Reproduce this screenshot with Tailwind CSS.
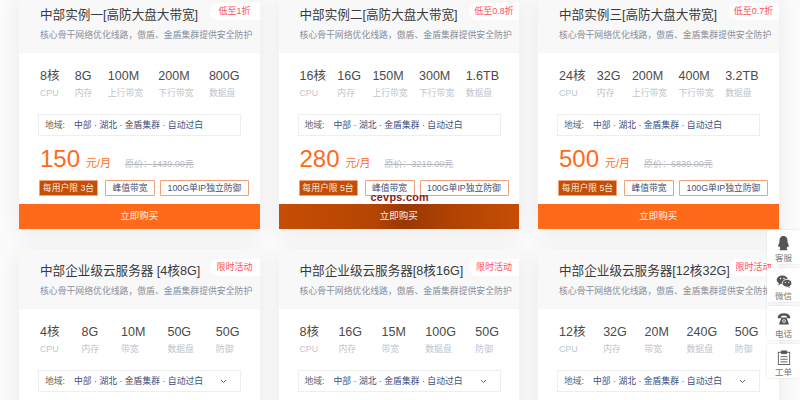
<!DOCTYPE html>
<html lang="zh-CN">
<head>
<meta charset="UTF-8">
<title>云服务器</title>
<script src="https://cdn.jsdelivr.net/npm/@tailwindcss/browser@4"></script>
</head>
<body class="relative h-[400px] w-[800px] overflow-hidden bg-[#fbfbfb] font-['Liberation_Sans','Noto_Sans_CJK_SC',sans-serif]">
<div id="cards" class="-mt-[7px] grid h-[407px] grid-cols-[240.5px_240.5px_240.5px] content-start gap-x-[19px] gap-y-[20px] overflow-hidden pl-[19px]"></div>

<!-- Floating sidebar -->
<div class="absolute left-[767px] top-[230px] flex w-[33px] flex-col gap-[4px] text-[#777]">
  <div class="flex h-[34px] flex-col items-center bg-white pt-[3px] text-[8.5px] leading-[11px] shadow-[0_0_2px_rgba(0,0,0,0.12)]">
    <div class="flex h-[20px] items-center"><svg width="13" height="17" viewBox="0 0 16 19" preserveAspectRatio="none" fill="#555"><path d="M8 1C4.600 1 3 3.600 3 6.500c0 .9 0 1.600-.2 2.300C2 10.200 1.300 11.700 1.500 13c.2.800.9.300 1.500-.5.300 1 .8 1.800 1.500 2.400-.9.400-1.500.9-1.300 1.500.3.800 2.300.8 3.800.6.400-.1.900-.2 1-.3.100.1.600.2 1 .3 1.500.2 3.500.2 3.800-.6.200-.6-.4-1.100-1.300-1.500.7-.6 1.200-1.400 1.500-2.400.6.800 1.300 1.300 1.500.5.200-1.300-.5-2.800-1.300-4.200-.2-.7-.2-1.400-.2-2.300C13 3.600 11.400 1 8 1z"/></svg></div>
    <span>客服</span>
  </div>
  <div class="flex h-[34px] flex-col items-center bg-white pt-[3px] text-[8.5px] leading-[11px] shadow-[0_0_2px_rgba(0,0,0,0.12)]">
    <div class="flex h-[20px] items-center"><svg width="16" height="13" viewBox="0 0 18 15" fill="#555"><ellipse cx="7" cy="5.500" rx="6.500" ry="5"/><path d="M3 9l-.5 3 3-2z"/><ellipse cx="12.500" cy="9.500" rx="5.500" ry="4.500" stroke="#fff" stroke-width="1"/><path d="M15 13l1 2-3-1.500z"/><circle cx="5" cy="4" r=".9" fill="#fff"/><circle cx="9" cy="4" r=".9" fill="#fff"/><circle cx="10.500" cy="8.500" r=".7" fill="#fff"/><circle cx="14.500" cy="8.500" r=".7" fill="#fff"/></svg></div>
    <span>微信</span>
  </div>
  <div class="flex h-[34px] flex-col items-center bg-white pt-[3px] text-[8.5px] leading-[11px] shadow-[0_0_2px_rgba(0,0,0,0.12)]">
    <div class="flex h-[20px] items-center"><svg width="14" height="14" viewBox="0 0 18 17" fill="#555"><path d="M1 6c0-3 4-5 8-5s8 2 8 5v1.500h-4.500V5c-2-.8-5-.8-7 0v2.500H1z"/><path d="M6 6.500h6l3 7.500v1.500H3V14z"/><circle cx="9" cy="11" r="2.300" fill="#fff"/><circle cx="9" cy="11" r="1.100"/></svg></div>
    <span>电话</span>
  </div>
  <div class="flex h-[34px] flex-col items-center bg-white pt-[3px] text-[8.5px] leading-[11px] shadow-[0_0_2px_rgba(0,0,0,0.12)]">
    <div class="flex h-[20px] items-center"><svg width="14" height="15" viewBox="0 0 16 17" fill="none" stroke="#555" stroke-width="1"><rect x="1.500" y="2.500" width="13" height="14"/><path d="M5 1h6v3H5z" fill="#555"/><path d="M4 7.500h8M4 10.500h8M4 13.500h8"/></svg></div>
    <span>工单</span>
  </div>
</div>

<script>
  const plans = [
    { title: '中部实例一[高防大盘大带宽]', tag: '低至1折', specs: [['8核','CPU'],['8G','内存'],['100M','上行带宽'],['200M','下行带宽'],['800G','数据盘']], price: '150', old: '1439.00', limit: '3台' },
    { title: '中部实例二[高防大盘大带宽]', tag: '低至0.8折', specs: [['16核','CPU'],['16G','内存'],['150M','上行带宽'],['300M','下行带宽'],['1.6TB','数据盘']], price: '280', old: '3219.00', limit: '5台', hover: true },
    { title: '中部实例三[高防大盘大带宽]', tag: '低至0.7折', specs: [['24核','CPU'],['32G','内存'],['200M','上行带宽'],['400M','下行带宽'],['3.2TB','数据盘']], price: '500', old: '6839.00', limit: '5台' },
    { title: '中部企业级云服务器 [4核8G]', tag: '限时活动', specs: [['4核','CPU'],['8G','内存'],['10M','带宽'],['50G','数据盘'],['50G','防御']], select: true },
    { title: '中部企业级云服务器[8核16G]', tag: '限时活动', specs: [['8核','CPU'],['16G','内存'],['15M','带宽'],['100G','数据盘'],['50G','防御']], select: true },
    { title: '中部企业级云服务器[12核32G]', tag: '限时活动', specs: [['12核','CPU'],['32G','内存'],['20M','带宽'],['240G','数据盘'],['50G','防御']], select: true }
  ];

  function cardHtml(p) {
    const specs = p.specs.map(s => `<div><div class="text-[12.5px] leading-[18px] text-[#4a4a4a]">${s[0]}</div><div class="mt-[2px] text-[8.8px] leading-[12px] text-[#c0c4cc]">${s[1]}</div></div>`).join('');
    const chevron = p.select ? '<svg class="ml-[17px]" width="7" height="5" viewBox="0 0 7 5" fill="none" stroke="#666" stroke-width="1"><path d="M1 1l2.500 2.500L6 1"/></svg>' : '';
    const buy = p.hover
      ? '<div class="mt-auto flex h-[25px] items-center justify-center bg-[linear-gradient(90deg,#c74d05_0%,#b54503_40%,#993703_52%,#b04303_72%,#c74d05_100%)] text-[9.5px] text-[#ffeee4]">立即购买</div><div class="absolute left-[92px] top-[197px] font-[\'DejaVu_Sans\',sans-serif] text-[10.8px] font-bold leading-[14px] tracking-[0.3px] text-[#8c1c1c]">cevps.com</div>'
      : '<div class="mt-auto flex h-[25px] items-center justify-center bg-[#ff6a1a] text-[9.5px] text-[#ffeee4]">立即购买</div>';
    const bottom = p.price ? `
      <div class="mt-[8px] flex h-[30px] items-end pl-[21px]">
        <span class="text-[24px] leading-[30px] text-[#ff6a1a]">${p.price}</span>
        <span class="ml-[6px] mb-[3px] text-[11px] leading-[16px] text-[#ff6a1a]">元/月</span>
        <span class="ml-[14px] mb-[4px] text-[9px] leading-[12px] text-[#b5b8c0] line-through">原价：${p.old}元</span>
      </div>
      <div class="mt-[6px] flex pl-[20px] text-[8.8px] leading-[14px]">
        <span class="w-[59px] rounded-[1px] border border-[#f0a07a] bg-[#c24e08] text-center text-[#ffe9dc]">每用户限 ${p.limit}</span>
        <span class="ml-[7px] w-[50px] rounded-[1px] border border-[#f0a07a] text-center text-[#44506f]">峰值带宽</span>
        <span class="ml-[5px] w-[89px] rounded-[1px] border border-[#f0a07a] text-center text-[#44506f]">100G单IP独立防御</span>
      </div>
      ${buy}` : '';
    return `
    <div class="relative flex h-[236px] flex-col bg-white shadow-[0_4px_22px_rgba(0,0,0,0.07)]">
      <div class="absolute right-0 top-[10px] flex h-[17px] w-[50px] items-center justify-center rounded-l-full bg-white text-[9px] text-[#ff4d55]">${p.tag}</div>
      <div class="h-[60px] bg-[#f8f8f9] pl-[21px] pt-[13px]">
        <div class="text-[12.6px] leading-[18px] text-[#3a3a3a]">${p.title}</div>
        <div class="mt-[5px] text-[8.85px] leading-[12px] text-[#8a8f99]">核心骨干网络优化线路，傲盾、金盾集群提供安全防护</div>
      </div>
      <div class="mt-[14px] flex justify-between pl-[21px] pr-[20px]">${specs}</div>
      <div class="ml-[19px] mt-[15px] flex h-[22px] w-[203px] shrink-0 items-center border border-[#eeeeee] pl-[6px] pt-[1px] text-[8.8px]">
        <span class="w-[29px] text-[#666]">地域:</span><span class="text-[#3d4f7d]">中部 · 湖北 · 金盾集群 · 自动过白</span>${chevron}
      </div>
      ${bottom}
    </div>`;
  }

  document.getElementById('cards').innerHTML = plans.map(cardHtml).join('');
</script>
</body>
</html>
